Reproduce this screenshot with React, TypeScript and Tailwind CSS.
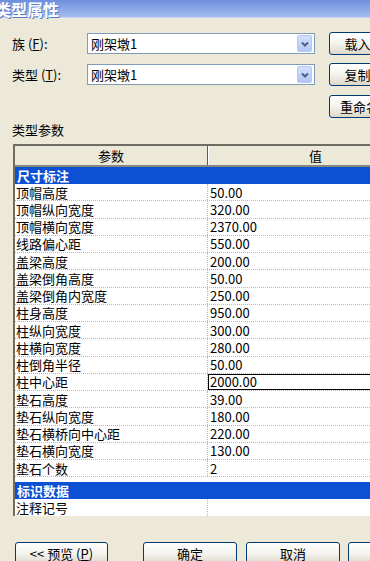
const rows: [string, string][] = [
  ['顶帽高度', '50.00'],
  ['顶帽纵向宽度', '320.00'],
  ['顶帽横向宽度', '2370.00'],
  ['线路偏心距', '550.00'],
  ['盖梁高度', '200.00'],
  ['盖梁倒角高度', '50.00'],
  ['盖梁倒角内宽度', '250.00'],
  ['柱身高度', '950.00'],
  ['柱纵向宽度', '300.00'],
  ['柱横向宽度', '280.00'],
  ['柱倒角半径', '50.00'],
  ['柱中心距', '2000.00'],
  ['垫石高度', '39.00'],
  ['垫石纵向宽度', '180.00'],
  ['垫石横桥向中心距', '220.00'],
  ['垫石横向宽度', '130.00'],
  ['垫石个数', '2'],
];

const XpButton = ({ label, className }: { label: React.ReactNode; className: string }) => (
  <div
    className={`h-[23px] shrink-0 rounded-[3px] border border-[#003c74] bg-gradient-to-b from-[#ffffff] via-[#f4f3ee] to-[#dcd8c8] flex items-center justify-center text-[13px] text-black ${className}`}
  >
    {label}
  </div>
);

const Select = ({ value }: { value: string }) => (
  <div className="relative h-[21px] w-[228px] shrink-0 border border-[#7f9db9] bg-white flex items-center pl-[3px] text-[13px] text-black">
    {value}
    <div className="absolute right-[2px] top-[1px] h-[17px] w-[15px] rounded-[2px] border border-[#b6c8f2] bg-gradient-to-b from-[#d4e0fd] to-[#b2c6f4] flex items-center justify-center">
      <svg width="8" height="6" viewBox="0 0 8 6">
        <path d="M1 1.5 L4 4.5 L7 1.5" fill="none" stroke="#4d6185" strokeWidth="2" />
      </svg>
    </div>
  </div>
);

const GroupRow = ({ label }: { label: string }) => (
  <div className="h-[17px] bg-[#0c50d4] flex items-center pl-[2px] text-[13px] font-bold text-white">{label}</div>
);

export default function App() {
  return (
    <div
      className="w-[370px] h-[561px] overflow-hidden bg-[#ece9d8] text-black"
      style={{ fontFamily: '"Noto Sans CJK SC", "Liberation Sans", sans-serif' }}
    >
      <div className="h-[18px] bg-gradient-to-b from-[#6f8fdc] to-[#a4bcee] border-b border-[#c8d6f4] flex items-center">
        <span className="ml-[-5px] text-[16px] leading-none font-bold text-white [text-shadow:1px_1px_0_#5a78c0]">类型属性</span>
      </div>

      <div className="w-[420px]">
        <div className="mt-[14px] h-[23px] flex items-center">
          <span className="ml-[12px] w-[75px] text-[13px]">
            族 (<u>F</u>):
          </span>
          <Select value="刚架墩1" />
          <XpButton label="载入..." className="ml-[14px] w-[68px]" />
        </div>
        <div className="mt-[8px] h-[23px] flex items-center">
          <span className="ml-[12px] w-[75px] text-[13px]">
            类型 (<u>T</u>):
          </span>
          <Select value="刚架墩1" />
          <XpButton label="复制..." className="ml-[14px] w-[68px]" />
        </div>
        <div className="mt-[9px] h-[23px] flex items-center">
          <XpButton label="重命名..." className="ml-[329px] w-[72px]" />
        </div>

        <div className="mt-[4px] h-[16px] leading-[16px] ml-[12px] text-[13px]">类型参数</div>

        <div className="mt-[6px] ml-[13px] w-[409px] border-t-2 border-l-2 border-[#6f6d62] bg-white">
          <div className="h-[21px] flex bg-[#ece9d8] border-b-2 border-[#8a887c] text-[13px]">
            <div className="w-[193px] flex items-center justify-center border-r border-[#5e5c52]">参数</div>
            <div className="flex-1 flex items-center justify-center border-l border-white">值</div>
          </div>
          <GroupRow label="尺寸标注" />
          {rows.map(([k, v], i) => (
            <div key={k} className="h-[17.25px] flex border-b border-dotted border-[#b8b8b8] text-[13px] leading-none">
              <div className="w-[193px] flex items-center pl-[1px] border-r border-dotted border-[#b8b8b8]">{k}</div>
              {i === 11 ? (
                <div className="flex-1 flex items-center pl-[1px] border border-black">{v}</div>
              ) : (
                <div className="flex-1 flex items-center pl-[2px]">{v}</div>
              )}
            </div>
          ))}
          <div className="h-[5px]" />
          <GroupRow label="标识数据" />
          <div className="h-[17px] flex text-[13px] leading-none">
            <div className="w-[193px] flex items-center pl-[1px] border-r border-dotted border-[#b8b8b8]">注释记号</div>
            <div className="flex-1" />
          </div>
        </div>

        <div className="mt-[26px] flex">
          <XpButton label={<span>&lt;&lt; 预览 (<u>P</u>)</span>} className="ml-[15px] w-[93px]" />
          <XpButton label="确定" className="ml-[35px] w-[94px]" />
          <XpButton label="取消" className="ml-[9px] w-[94px]" />
          <XpButton label="帮助" className="ml-[8px] w-[94px]" />
        </div>
      </div>
    </div>
  );
}
